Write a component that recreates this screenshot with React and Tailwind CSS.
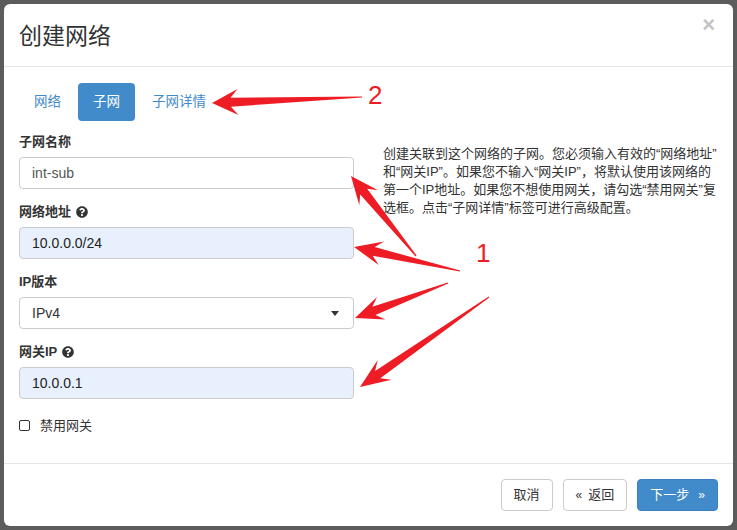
import React from "react";
import { FaQuestionCircle } from "react-icons/fa";

function arrowPoints(tail, tip, head = 26, half = 12, shaft = 4.5, tailW = 0.6) {
    const dx = tip[0] - tail[0];
    const dy = tip[1] - tail[1];
    const len = Math.hypot(dx, dy);
    const ux = dx / len;
    const uy = dy / len;
    const nx = -uy;
    const ny = ux;
    const b = [tip[0] - ux * head * 0.72, tip[1] - uy * head * 0.72];
    const h = [tip[0] - ux * head, tip[1] - uy * head];
    const pts = [
        [tail[0] + nx * tailW, tail[1] + ny * tailW],
        [b[0] + nx * shaft, b[1] + ny * shaft],
        [h[0] + nx * half, h[1] + ny * half],
        tip,
        [h[0] - nx * half, h[1] - ny * half],
        [b[0] - nx * shaft, b[1] - ny * shaft],
        [tail[0] - nx * tailW, tail[1] - ny * tailW],
    ];
    return pts.map((p) => p.map((v) => v.toFixed(1)).join(",")).join(" ");
}

const arrows = [
    { tail: [362, 97], tip: [212, 103], head: 26, half: 13 },
    { tail: [416, 256], tip: [351, 176], head: 28, half: 12 },
    { tail: [460, 271], tip: [354, 247], head: 28, half: 12 },
    { tail: [448, 283], tip: [355, 318], head: 28, half: 12 },
    { tail: [489, 297], tip: [360, 387], head: 30, half: 12 },
];

function Field({ label, help, children }) {
    return (
        <div className="mb-[13px]">
            <div className="flex items-center gap-[5px] h-5 mb-[5px] text-[13px] font-bold text-[#333]">
                {label}
                {help && <FaQuestionCircle className="text-[12px] text-[#333]" />}
            </div>
            {children}
        </div>
    );
}

function Input({ value, filled }) {
    return (
        <div
            className={
                "h-8 w-[335px] rounded border border-[#ccc] px-3 flex items-center text-[14px] " +
                (filled ? "bg-[#e8f0fe] text-[#222]" : "bg-white text-[#555]")
            }
        >
            {value}
        </div>
    );
}

export default function App() {
    return (
        <div className="relative w-[737px] h-[530px] bg-[#5c5c5c] pt-1 pl-1 font-['Liberation_Sans','Noto_Sans_CJK_SC',sans-serif] overflow-hidden">
            <div className="w-[729px] h-[522px] bg-white rounded-md flex flex-col">
                {/* header */}
                <div className="h-[63px] shrink-0 border-b border-[#e5e5e5] flex items-center justify-between pl-[15px] pr-[18px]">
                    <h3 className="text-[23px] text-[#333] pt-[3px]">创建网络</h3>
                    <span className="text-[22px] font-bold text-[#c4c4c4] leading-none -mt-5">×</span>
                </div>

                {/* body */}
                <div className="flex-1 px-[15px] pt-4">
                    <ul className="flex gap-[2px] text-[13.5px]">
                        <li className="h-[38px] px-[15px] flex items-center text-[#428bca] rounded">网络</li>
                        <li className="h-[38px] px-[15px] flex items-center text-white bg-[#428bca] rounded">子网</li>
                        <li className="h-[38px] px-[15px] flex items-center text-[#428bca] rounded">子网详情</li>
                    </ul>

                    <div className="flex mt-[11px]">
                        <div className="w-[335px] shrink-0">
                            <Field label="子网名称">
                                <Input value="int-sub" />
                            </Field>
                            <Field label="网络地址" help>
                                <Input value="10.0.0.0/24" filled />
                            </Field>
                            <Field label="IP版本">
                                <div className="h-8 w-[335px] rounded border border-[#ccc] pl-3 pr-[14px] flex items-center justify-between text-[14px] text-[#333]">
                                    IPv4
                                    <span className="w-0 h-0 border-l-[4px] border-r-[4px] border-t-[5px] border-l-transparent border-r-transparent border-t-[#333]" />
                                </div>
                            </Field>
                            <Field label="网关IP" help>
                                <Input value="10.0.0.1" filled />
                            </Field>
                            <label className="flex items-center gap-[10px] mt-[17px] text-[13px] text-[#333]">
                                <span className="w-[11px] h-[11px] border border-[#333] rounded-[2px] bg-white" />
                                禁用网关
                            </label>
                        </div>
                        <div className="ml-[29px] mt-[13px] text-[13px] leading-[18px] text-[#333] whitespace-nowrap">
                            创建关联到这个网络的子网。您必须输入有效的“网络地址”<br />
                            和“网关IP”。如果您不输入“网关IP”，将默认使用该网络的<br />
                            第一个IP地址。如果您不想使用网关，请勾选“禁用网关”复<br />
                            选框。点击“子网详情”标签可进行高级配置。
                        </div>
                    </div>
                </div>

                {/* footer */}
                <div className="shrink-0 border-t border-[#e5e5e5] p-[15px] flex justify-end gap-[10px] text-[13px]">
                    <button className="h-8 px-3 rounded border border-[#ccc] bg-white text-[#333]">取消</button>
                    <button className="h-8 px-3 rounded border border-[#ccc] bg-white text-[#333] flex items-center gap-[6px]">
                        <span className="text-[12px]">«</span>返回
                    </button>
                    <button className="h-8 px-3 rounded border border-[#3a7fbf] bg-[#428bca] text-white flex items-center gap-[9px]">
                        下一步<span className="text-[12px]">»</span>
                    </button>
                </div>
            </div>

            {/* red annotations */}
            <svg className="absolute inset-0 pointer-events-none" width="737" height="530">
                {arrows.map((a, i) => (
                    <polygon key={i} points={arrowPoints(a.tail, a.tip, a.head, a.half)} fill="#ee1c25" />
                ))}
            </svg>
            <span className="absolute left-[368px] top-[82px] text-[26px] leading-none text-[#ee1c25]">2</span>
            <span className="absolute left-[476px] top-[240px] text-[26px] leading-none text-[#ee1c25]">1</span>
        </div>
    );
}
